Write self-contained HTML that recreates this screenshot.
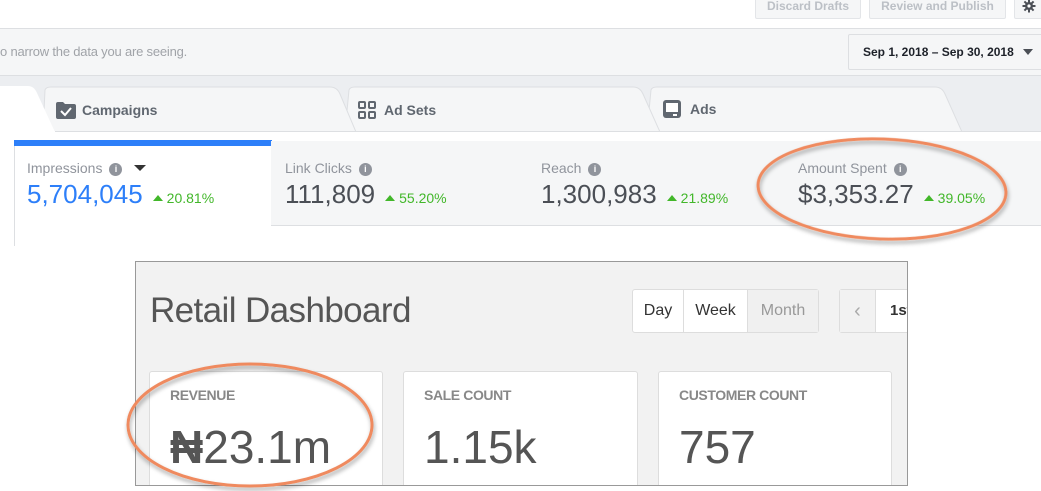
<!DOCTYPE html>
<html><head><meta charset="utf-8"><style>
*{margin:0;padding:0;box-sizing:border-box}
body{width:1041px;height:491px;overflow:hidden;background:#fff;font-family:"Liberation Sans",Arial,sans-serif;position:relative}
.a{position:absolute}
.btn{top:-4px;height:23px;background:#f5f6f7;border:1px solid #e3e5e8;border-radius:2px;color:#bcc0c6;font-weight:bold;font-size:12px;text-align:center;line-height:18px}
.lbl{font-size:14px;color:#90949c}
.val{font-size:26px;color:#4b4f56}
.pct{font-size:14px;color:#42b72a}
.tri{display:inline-block;width:0;height:0;border-left:5px solid transparent;border-right:5px solid transparent;border-bottom:6px solid #42b72a;margin:0 4px 2px 10px}
.info{display:inline-block;width:13px;height:13px;border-radius:50%;background:#90949c;color:#fff;font-size:9px;font-weight:bold;text-align:center;line-height:13px;margin-left:7px;vertical-align:1px}
.card{background:#f5f6f7;top:141px;height:85px;border-right:1px solid #dddfe2;border-bottom:1px solid #dddfe2}
.tab{font-weight:bold;font-size:14px;color:#606770}
.dc{background:#fff;border:1px solid #ddd;border-radius:3px;top:370px;height:130px}
.dl{font-size:14px;color:#888;position:absolute;left:20px;top:15px;font-weight:bold;letter-spacing:-0.4px}
.dv{font-size:46px;color:#555;position:absolute;left:20px;top:48px}
</style></head><body>
<div class="a btn" style="left:755px;width:106px">Discard Drafts</div>
<div class="a btn" style="left:869px;width:137px">Review and Publish</div>
<div class="a btn" style="left:1014px;width:30px;color:#4b4f56;font-size:14px">
<svg width="14" height="14" viewBox="0 0 14 14" style="margin-top:2px"><g fill="#4b4f56"><circle cx="7" cy="7" r="4"/><rect x="6" y="0.5" width="2" height="13"/><rect x="0.5" y="6" width="13" height="2"/><rect x="6" y="0.5" width="2" height="13" transform="rotate(45 7 7)"/><rect x="6" y="0.5" width="2" height="13" transform="rotate(-45 7 7)"/></g><circle cx="7" cy="7" r="1.6" fill="#fff"/></svg></div>
<div class="a" style="left:0;top:28px;width:1041px;height:48px;background:#f5f6f7;border-top:1px solid #dddfe2;border-bottom:1px solid #dddfe2"></div>
<div class="a" style="left:0;top:44px;font-size:13px;color:#a0a3a8;letter-spacing:-0.2px">o narrow the data you are seeing.</div>
<div class="a" style="left:848px;top:34px;width:200px;height:36px;background:#f5f6f7;border:1px solid #dddfe2;border-radius:2px;font-size:12px;font-weight:bold;color:#1d2129;line-height:34px;padding-left:14px">Sep 1, 2018 – Sep 30, 2018 <span style="display:inline-block;border-left:5px solid transparent;border-right:5px solid transparent;border-top:6px solid #4b4f56;margin-left:6px;vertical-align:1px"></span></div>
<svg class="a" style="left:0;top:76px" width="1041" height="56">
<rect width="1041" height="56" fill="#eceef1"/>
<path d="M647 56 L651 14 Q652 11 657 11 L935 11 Q942 11 945 18 L962 56Z" fill="#f5f6f7" stroke="#dddfe2"/>
<path d="M345 56 L349 14 Q350 11 355 11 L633 11 Q640 11 643 18 L660 56Z" fill="#f5f6f7" stroke="#dddfe2"/>
<path d="M43 56 L45 14 Q46 11 51 11 L330 11 Q337 11 340 18 L356 56Z" fill="#f5f6f7" stroke="#dddfe2"/>
<path d="M0 56 L0 10 L28 10 Q34 10 37 17 L55 56Z" fill="#fff"/>
<line x1="0" y1="55.5" x2="1041" y2="55.5" stroke="#dddfe2"/>
<line x1="0" y1="55.5" x2="55" y2="55.5" stroke="#fff"/>
</svg>
<svg class="a" style="left:56px;top:101px" width="20" height="18"><path d="M0 3 Q0 1 2 1 L7 1 L9 3 L18 3 Q20 3 20 5 L20 16 Q20 18 18 18 L2 18 Q0 18 0 16Z" fill="#606770"/><path d="M5 10 L9 14 L15 7" stroke="#fff" stroke-width="2" fill="none"/></svg>
<div class="a tab" style="left:82px;top:102px">Campaigns</div>
<svg class="a" style="left:358px;top:101px" width="18" height="18" fill="none" stroke="#606770" stroke-width="2"><rect x="1" y="1" width="6" height="6" rx="1"/><rect x="11" y="1" width="6" height="6" rx="1"/><rect x="1" y="11" width="6" height="6" rx="1"/><rect x="11" y="11" width="6" height="6" rx="1"/></svg>
<div class="a tab" style="left:384px;top:102px">Ad Sets</div>
<svg class="a" style="left:663px;top:100px" width="18" height="18"><rect x="0" y="0" width="18" height="18" rx="3" fill="#606770"/><rect x="3" y="3" width="12" height="9" fill="#fff"/><rect x="10" y="14" width="4" height="2" fill="#fff"/></svg>
<div class="a tab" style="left:690px;top:101px">Ads</div>
<div class="a" style="left:14px;top:140px;width:258px;height:6px;background:#2d7ff9"></div>
<div class="a" style="left:14px;top:146px;width:1px;height:100px;background:#dddfe2"></div>
<div class="a card" style="left:271px;width:258px"></div>
<div class="a card" style="left:528px;width:258px"></div>
<div class="a card" style="left:785px;width:256px;border-right:none"></div>
<div class="a" style="left:27px;top:160px"><div class="lbl">Impressions<span class="info">i</span><span style="display:inline-block;border-left:6px solid transparent;border-right:6px solid transparent;border-top:6px solid #333;margin-left:12px;vertical-align:2px"></span></div><div class="val" style="color:#2d7ff9;margin-top:3px">5,704,045<span class="tri"></span><span class="pct">20.81%</span></div></div>
<div class="a" style="left:285px;top:160px"><div class="lbl">Link Clicks<span class="info">i</span></div><div class="val" style="margin-top:3px">111,809<span class="tri"></span><span class="pct">55.20%</span></div></div>
<div class="a" style="left:541px;top:160px"><div class="lbl">Reach<span class="info">i</span></div><div class="val" style="margin-top:3px">1,300,983<span class="tri"></span><span class="pct">21.89%</span></div></div>
<div class="a" style="left:798px;top:160px"><div class="lbl">Amount Spent<span class="info">i</span></div><div class="val" style="margin-top:3px">$3,353.27<span class="tri"></span><span class="pct">39.05%</span></div></div>

<div class="a" style="left:135px;top:261px;width:773px;height:225px;background:#f2f2f2;border:1px solid #999;overflow:hidden">
<div class="a" style="left:14px;top:29px;font-size:35px;color:#555;letter-spacing:-0.6px">Retail Dashboard</div>
<div class="a" style="left:496px;top:27px;width:187px;height:44px;border:1px solid #ddd;border-radius:3px;background:#fff;font-size:16px;color:#333;line-height:42px">
<span class="a" style="left:0;width:51px;text-align:center;border-right:1px solid #ddd;height:42px">Day</span>
<span class="a" style="left:51px;width:63px;text-align:center;height:42px">Week</span>
<span class="a" style="left:114px;width:71px;text-align:center;background:#f0f0f0;color:#999;height:42px;border-left:1px solid #ddd">Month</span></div>
<div class="a" style="left:703px;top:27px;width:80px;height:44px;border:1px solid #ddd;border-radius:3px;background:#fff;line-height:42px">
<span class="a" style="left:0;width:36px;height:42px;background:#f2f2f2;border-right:1px solid #ddd;text-align:center;color:#aaa;font-size:20px">&lsaquo;</span>
<span class="a" style="left:50px;font-weight:bold;font-size:15px;color:#333">1st</span></div>
<div class="a dc" style="left:13px;top:109px;width:234px"><div class="dl">REVENUE</div><div class="dv"><span style="font-weight:bold">₦</span>23.1m</div></div>
<div class="a dc" style="left:267px;top:109px;width:235px"><div class="dl">SALE COUNT</div><div class="dv">1.15k</div></div>
<div class="a dc" style="left:522px;top:109px;width:234px"><div class="dl">CUSTOMER COUNT</div><div class="dv">757</div></div>
</div>

<svg class="a" style="left:0;top:0" width="1041" height="491">
<defs><filter id="s"><feDropShadow dx="1" dy="3" stdDeviation="2" flood-color="#000" flood-opacity="0.35"/></filter></defs>
<ellipse cx="882" cy="189" rx="124" ry="50" fill="none" stroke="#ef8a5e" stroke-width="3" filter="url(#s)" transform="rotate(2 882 189)"/>
<ellipse cx="250" cy="425" rx="122" ry="61" fill="none" stroke="#ef8a5e" stroke-width="3" filter="url(#s)"/>
</svg>
</body></html>
